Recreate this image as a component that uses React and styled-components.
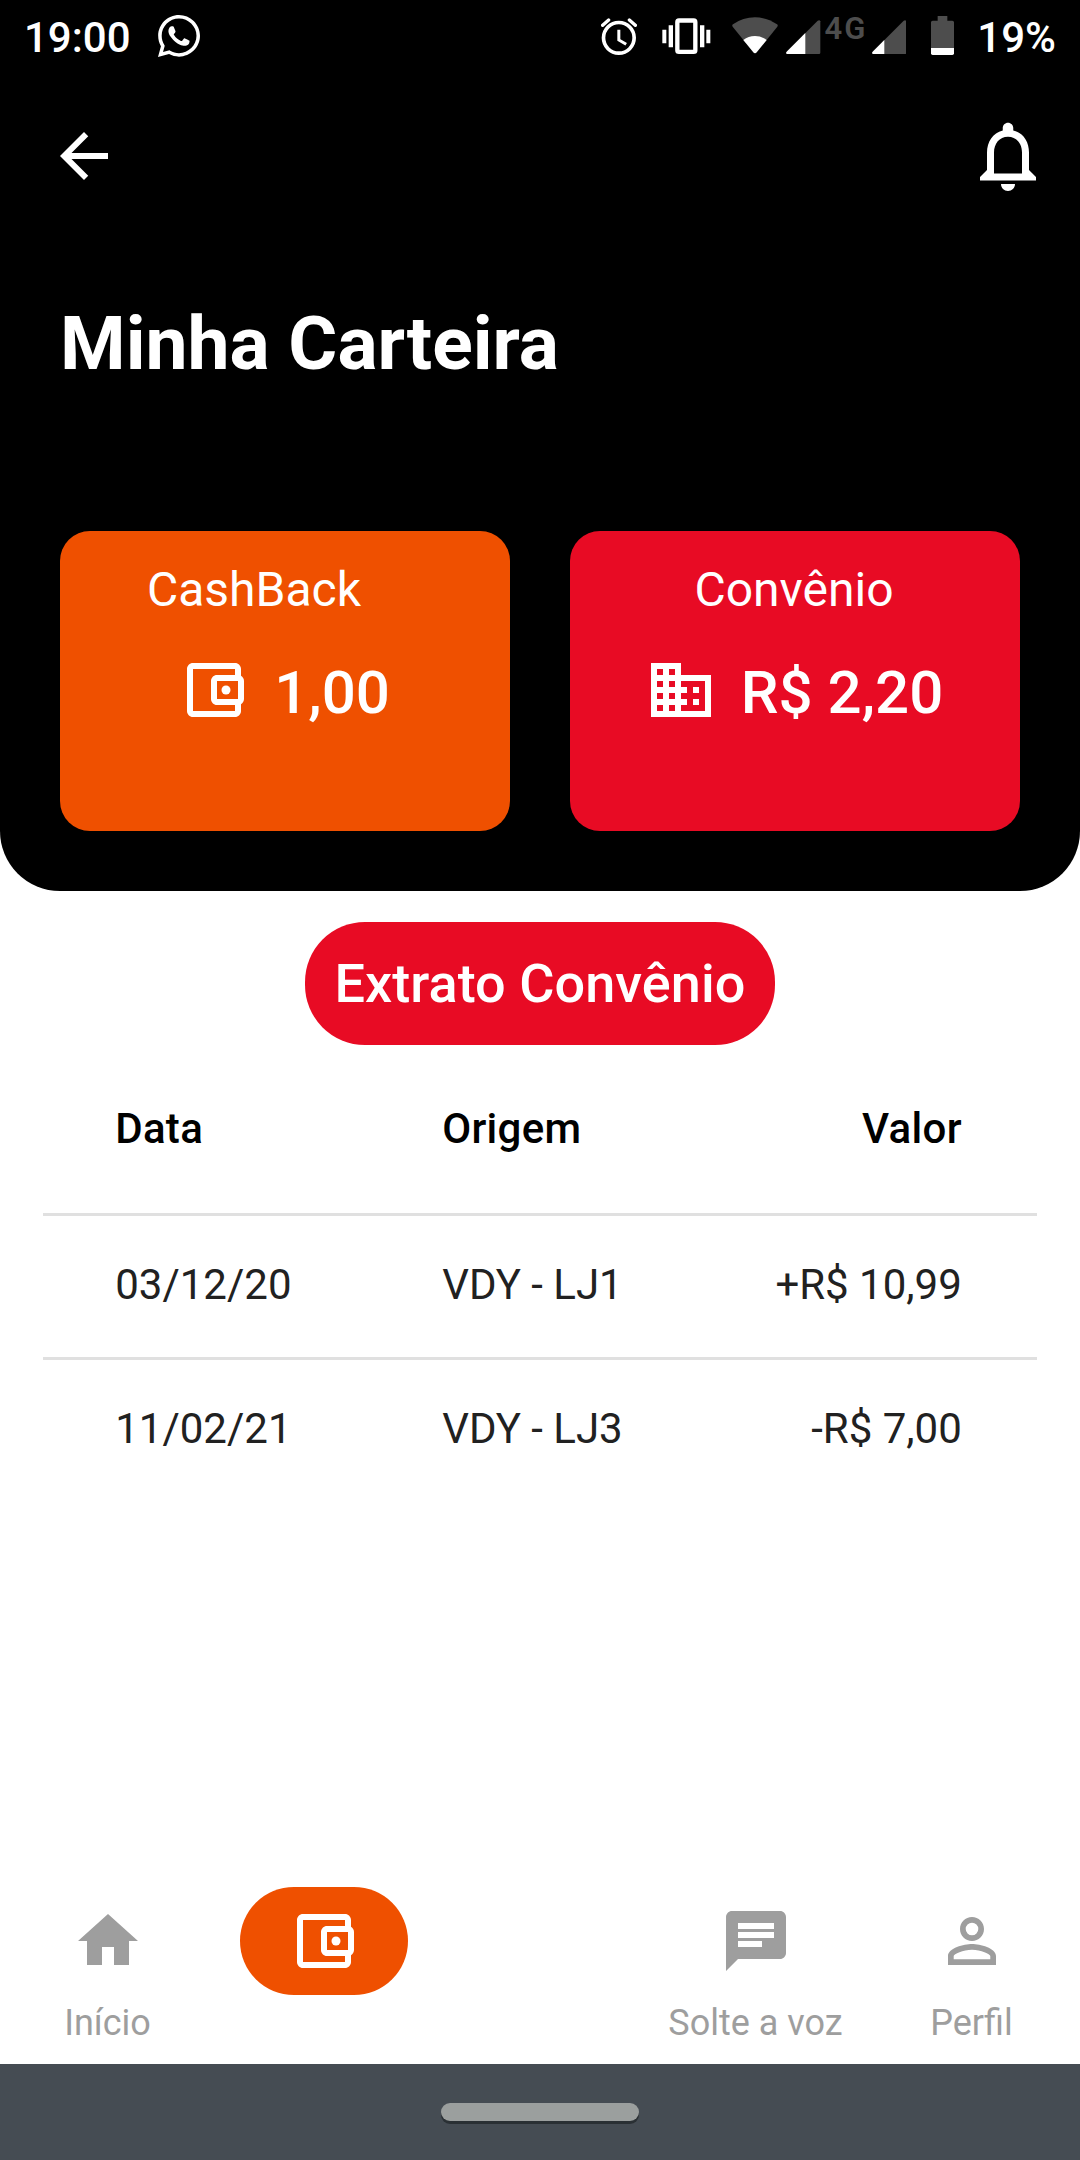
import React from 'react'
import styled, { createGlobalStyle } from 'styled-components'
import {
    MdArrowBack,
    MdNotificationsNone,
    MdBusiness,
    MdHome,
    MdChat,
    MdPersonOutline,
} from 'react-icons/md'
import { FaWhatsapp } from 'react-icons/fa'

const statement = [
    { id: 1, date: '03/12/20', origin: 'VDY - LJ1', value: '+R$ 10,99' },
    { id: 2, date: '11/02/21', origin: 'VDY - LJ3', value: '-R$ 7,00' },
]

function WalletIcon() {
    return (
        <svg viewBox="0 0 24 24" width="72" height="72" fill="currentColor">
            <path d="M21 7.28V5c0-1.1-.9-2-2-2H5c-1.11 0-2 .9-2 2v14c0 1.1.89 2 2 2h14c1.1 0 2-.9 2-2v-2.28c.59-.35 1-.98 1-1.72V9c0-.74-.41-1.38-1-1.72zM20 9v6h-7V9h7zM5 19V5h14v2h-6c-1.1 0-2 .9-2 2v6c0 1.1.9 2 2 2h6v2H5z" />
            <circle cx="16" cy="12" r="1.5" />
        </svg>
    )
}

function AlarmIcon() {
    return (
        <svg viewBox="0 0 108 114" width="36" height="38" fill="none" stroke="currentColor" strokeLinecap="round">
            <circle cx="53.5" cy="62.5" r="46" strokeWidth="11" />
            <path d="M5 25 23 9M85 9l18 16" strokeWidth="10" />
            <path d="M53.5 38v31l22 13" strokeWidth="9" strokeLinecap="butt" />
        </svg>
    )
}

function VibrateIcon() {
    return (
        <svg viewBox="0 0 147 108" width="49" height="36" fill="currentColor">
            <rect x="46" y="7.5" width="54" height="94" rx="5" fill="none" stroke="currentColor" strokeWidth="13" />
            <path d="M20 22h13v66H20zM1 35h12v41H1zM114 22h13v66h-13zM133 35h12v41h-12z" />
        </svg>
    )
}

function WifiIcon() {
    return (
        <svg viewBox="0 0 138 110" width="46" height="36.67">
            <path d="M3 22Q33 1 69 1t66 21q4 3 1 7L74 106q-5 5-10 0L2 29q-3-4 1-7z" fill="#4d4d4d" />
            <path d="M34 69q15-12 35-12t35 12L74 106q-5 5-10 0z" fill="#fff" />
        </svg>
    )
}

function SignalIcon({ level }) {
    return (
        <svg viewBox="0 0 103 103" width="34.33" height="34.33">
            <path d="M3 102q-5-2-1-7L95 2q6-4 8 2v94q0 4-4 4z" fill="#4d4d4d" />
            <path d={`M3 102q-5-2-1-7L${level} ${97 - level}V102z`} fill="#fff" />
        </svg>
    )
}

function BatteryIcon() {
    return (
        <svg viewBox="0 0 69 117" width="23" height="39">
            <path d="M20 0h29v14h15q5 0 5 5v77H0V19q0-5 5-5h15z" fill="#4d4d4d" />
            <path d="M0 96h69v16q0 5-5 5H5q-5 0-5-5z" fill="#fff" />
        </svg>
    )
}

function StatusBar() {
    return (
        <Status>
            <Clock>19:00</Clock>
            <FaWhatsapp size={48} />
            <StatusIcons>
                <AlarmIcon />
                <VibrateIcon />
                <WifiIcon />
                <SignalIcon level={58} />
                <Network>4G</Network>
                <SignalIcon level={37} />
                <BatteryIcon />
            </StatusIcons>
            <Percent>19%</Percent>
        </Status>
    )
}

function BalanceCard({ title, value, icon, color, shift }) {
    return (
        <Card $color={color}>
            <CardTitle $shift={shift}>{title}</CardTitle>
            <Balance>
                {icon}
                <Amount>{value}</Amount>
            </Balance>
        </Card>
    )
}

function NavItem({ label, icon, active }) {
    return (
        <Item>
            <ItemIcon $active={active}>{icon}</ItemIcon>
            {label && <ItemLabel>{label}</ItemLabel>}
        </Item>
    )
}

function App() {
    return (
        <Screen>
            <GlobalStyle />
            <Header>
                <StatusBar />
                <AppBar>
                    <MdArrowBack size={72} />
                    <MdNotificationsNone size={84} />
                </AppBar>
                <Title>Minha Carteira</Title>
                <Cards>
                    <BalanceCard title="CashBack" value="1,00" color="#ef5000" shift={60} icon={<WalletIcon />} />
                    <BalanceCard title="Convênio" value="R$ 2,20" color="#e80b24" icon={<MdBusiness size={72} />} />
                </Cards>
            </Header>
            <Content>
                <Badge>Extrato Convênio</Badge>
                <Table>
                    <HeadRow>
                        <span>Data</span>
                        <span>Origem</span>
                        <span>Valor</span>
                    </HeadRow>
                    {statement.map(row =>
                        <Row key={row.id}>
                            <span>{row.date}</span>
                            <span>{row.origin}</span>
                            <span>{row.value}</span>
                        </Row>
                    )}
                </Table>
            </Content>
            <BottomNav>
                <NavItem label="Início" icon={<MdHome size={72} />} />
                <NavItem active icon={<WalletIcon />} />
                <Item />
                <NavItem label="Solte a voz" icon={<MdChat size={72} />} />
                <NavItem label="Perfil" icon={<MdPersonOutline size={72} />} />
            </BottomNav>
            <GestureBar>
                <Handle />
            </GestureBar>
        </Screen>
    )
}

const GlobalStyle = createGlobalStyle`
    * {
        box-sizing: border-box;
    }

    body {
        margin: 0;
        background: #fff;
        font-family: Roboto, sans-serif;
    }

    svg {
        display: block;
        flex: none;
    }
`

const Screen = styled.div`
    display: flex;
    flex-direction: column;
    width: 1080px;
    height: 2160px;
    overflow: hidden;
    background: #fff;
`

const Header = styled.header`
    display: flex;
    flex-direction: column;
    padding-bottom: 60px;
    color: #fff;
    background: #000;
    border-radius: 0 0 60px 60px;
`

const Status = styled.div`
    display: flex;
    align-items: center;
    height: 72px;
    padding: 0 24px;
    font-size: 42px;
    font-weight: 500;
    line-height: 50px;
`

const Clock = styled.span`
    width: 131px;
    padding-top: 3px;
`

const StatusIcons = styled.div`
    display: flex;
    align-items: flex-start;
    height: 38px;
    margin-left: auto;

    svg:nth-child(2) {
        margin: 1px 21px 0 25px;
    }

    svg:nth-child(4) {
        margin: 2.5px 0 0 8px;
    }

    svg:nth-child(6) {
        margin: 2.5px 25px 0 0;
    }

    svg:nth-child(7) {
        margin-top: -1px;
    }
`

const Network = styled.span`
    width: 51px;
    padding-left: 4px;
    color: #4d4d4d;
    font-size: 31px;
    font-weight: 600;
    letter-spacing: 2px;
    line-height: 24px;
`

const Percent = styled.span`
    margin-left: 23.5px;
    padding-top: 3px;
`

const AppBar = styled.div`
    display: flex;
    align-items: center;
    justify-content: space-between;
    height: 168px;
    padding: 0 30px 0 48px;
`

const Title = styled.h1`
    margin: 59px 60px 0;
    font-size: 75px;
    font-weight: 700;
    line-height: 88px;
`

const Cards = styled.div`
    display: flex;
    gap: 60px;
    margin-top: 144px;
    padding: 0 60px;
`

const Card = styled.div`
    display: flex;
    flex: 1;
    flex-direction: column;
    align-items: center;
    height: 300px;
    padding: 30.5px 2px 0 0;
    background: ${({ $color }) => $color};
    border-radius: 30px;
`

const CardTitle = styled.div`
    padding-right: ${({ $shift = 0 }) => $shift}px;
    font-size: 48px;
    line-height: 56px;
`

const Balance = styled.div`
    display: flex;
    gap: 24px;
    height: 72px;
    margin-top: 36.5px;
`

const Amount = styled.span`
    font-size: 60px;
    font-weight: 500;
    line-height: 77px;
`

const Content = styled.main`
    display: flex;
    flex: 1;
    flex-direction: column;
    align-items: center;
    padding-top: 30.5px;
`

const Badge = styled.div`
    height: 123px;
    padding: 0 30px;
    color: #fff;
    background: #e80b24;
    border-radius: 60px;
    font-size: 54px;
    font-weight: 500;
    letter-spacing: 0.05px;
    line-height: 124px;
`

const Table = styled.div`
    width: 92%;
    font-size: 42px;
`

const Row = styled.div`
    display: grid;
    grid-template-columns: 327px 1fr auto;
    align-items: center;
    height: 144px;
    padding: 0 75px 0 72px;
    color: #212121;
    box-shadow: inset 0 3px 0 #e0e0e0;
`

const HeadRow = styled(Row)`
    height: 168px;
    color: #000;
    font-weight: 500;
    letter-spacing: 0.3px;
    box-shadow: none;
`

const BottomNav = styled.nav`
    display: flex;
    height: 180px;
    padding-top: 3px;
`

const Item = styled.div`
    display: flex;
    flex: 1;
    flex-direction: column;
    align-items: center;
    color: #9e9e9e;
`

const ItemIcon = styled.div`
    display: flex;
    align-items: center;
    justify-content: center;
    width: 168px;
    height: 108px;
    color: ${({ $active }) => $active ? '#fff' : '#9e9e9e'};
    background: ${({ $active }) => $active ? '#ef5000' : 'transparent'};
    border-radius: 54px;
`

const ItemLabel = styled.span`
    margin-top: 7px;
    padding-right: 1px;
    font-size: 36px;
    line-height: 42px;
    white-space: nowrap;
`

const GestureBar = styled.div`
    display: flex;
    justify-content: center;
    height: 96px;
    padding-top: 39px;
    background: #454c53;
`

const Handle = styled.div`
    width: 198px;
    height: 18px;
    background: #9b9f9e;
    border-radius: 9px;
    box-shadow: 0 3px 0 #2a3034;
`

export default App
